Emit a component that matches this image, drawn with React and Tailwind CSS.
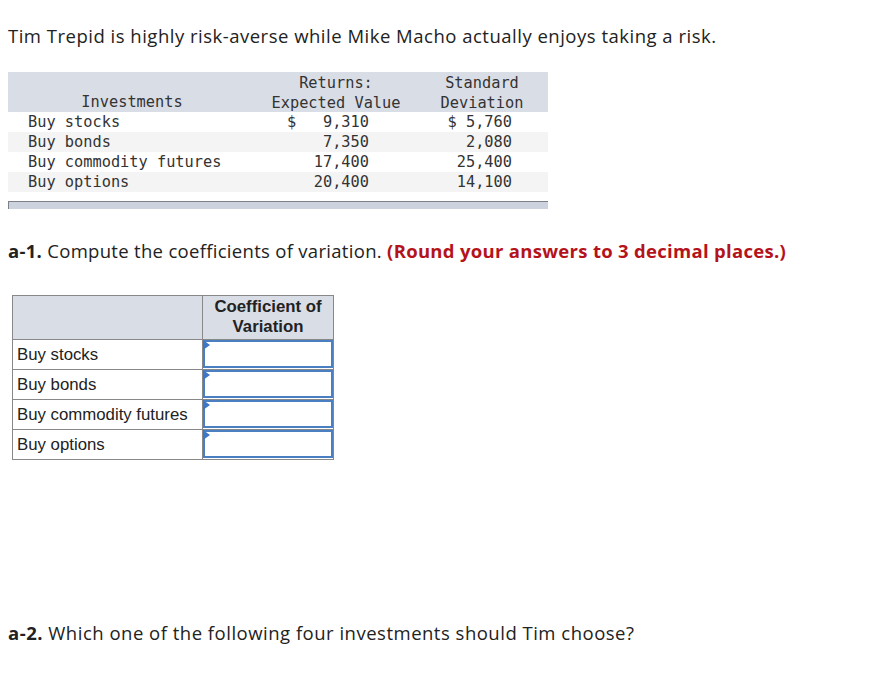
export default function App() {
  const sans = { fontFamily: '"Open Sans", "Lato", sans-serif' };
  const rows = [
    ["Buy stocks", "$", "9,310", "$ 5,760"],
    ["Buy bonds", "", "7,350", "2,080"],
    ["Buy commodity futures", "", "17,400", "25,400"],
    ["Buy options", "", "20,400", "14,100"],
  ];
  return (
    <div className="w-[885px] h-[685px] bg-white text-[#222] pt-[24px] px-[8px]" style={sans}>
      <p className="text-[18.5px] leading-[24px] tracking-[0.5px]">
        Tim Trepid is highly risk-averse while Mike Macho actually enjoys taking a risk.
      </p>
      <div className="mt-[24px] w-[540px] text-[15.3px] leading-[20px] text-[#333]" style={{ fontFamily: '"DejaVu Sans Mono", "Liberation Mono", monospace' }}>
        <div className="flex bg-[#d9dde6] h-[40px] pt-[1px]">
          <div className="w-[248px] flex items-end justify-center">Investments</div>
          <div className="w-[160px] flex flex-col items-center text-center">
            <span>Returns:</span>
            <span>Expected Value</span>
          </div>
          <div className="w-[132px] flex flex-col items-center">
            <span>Standard</span>
            <span>Deviation</span>
          </div>
        </div>
        {rows.map((r, i) => (
          <div key={i} className={`flex h-[20px] ${i % 2 === 1 ? "bg-[#f4f4f4]" : "bg-white"}`}>
            <div className="w-[248px] pl-[20px] whitespace-pre">{r[0]}</div>
            <div className="w-[160px] flex">
              <span className="w-[40px] pl-[31px]">{r[1]}</span>
              <span className="w-[73px] text-right">{r[2]}</span>
            </div>
            <div className="w-[132px] flex justify-start">
              <span className="w-[96px] text-right whitespace-pre">{r[3]}</span>
            </div>
          </div>
        ))}
        <div className="h-[9px]"></div>
        <div className="h-[8px] bg-[#ccd3df] border-t border-l border-[#7b8089]"></div>
      </div>
      <p className="mt-[30px] text-[18.5px] leading-[24px] tracking-[0.3px]">
        <b>a-1.</b> Compute the coefficients of variation.{" "}
        <b className="text-[#b5131b]">(Round your answers to 3 decimal places.)</b>
      </p>
      <div className="mt-[32px] ml-[4px] w-[322px] border border-[#888] text-[16.8px] text-[#222]" style={{ fontFamily: '"Liberation Sans", Arial, sans-serif' }}>
        <div className="flex h-[44px] bg-[#d9dde6] border-b border-[#888]">
          <div className="w-[190px] border-r border-[#888]"></div>
          <div className="flex-1 flex items-center justify-center text-center font-bold leading-[20px] pb-[1px]">
            Coefficient of<br />Variation
          </div>
        </div>
        {rows.map((r, i) => (
          <div key={i} className={`flex ${i < 3 ? "h-[30px] border-b border-[#888]" : "h-[29px]"}`}>
            <div className="w-[190px] border-r border-[#888] pl-[4px] flex items-center">{r[0]}</div>
            <div className="flex-1 relative p-0">
              <div className="h-[28px] border-2 border-[#4a7fc1] bg-white"></div>
              <div className="absolute left-0 top-0 w-0 h-0 border-t-[5px] border-b-[5px] border-l-[7px] border-t-transparent border-b-transparent border-l-[#3d78c6]"></div>
            </div>
          </div>
        ))}
      </div>
      <p className="mt-[161px] text-[18.5px] leading-[24px] tracking-[0.5px]">
        <b>a-2.</b> Which one of the following four investments should Tim choose?
      </p>
    </div>
  );
}
